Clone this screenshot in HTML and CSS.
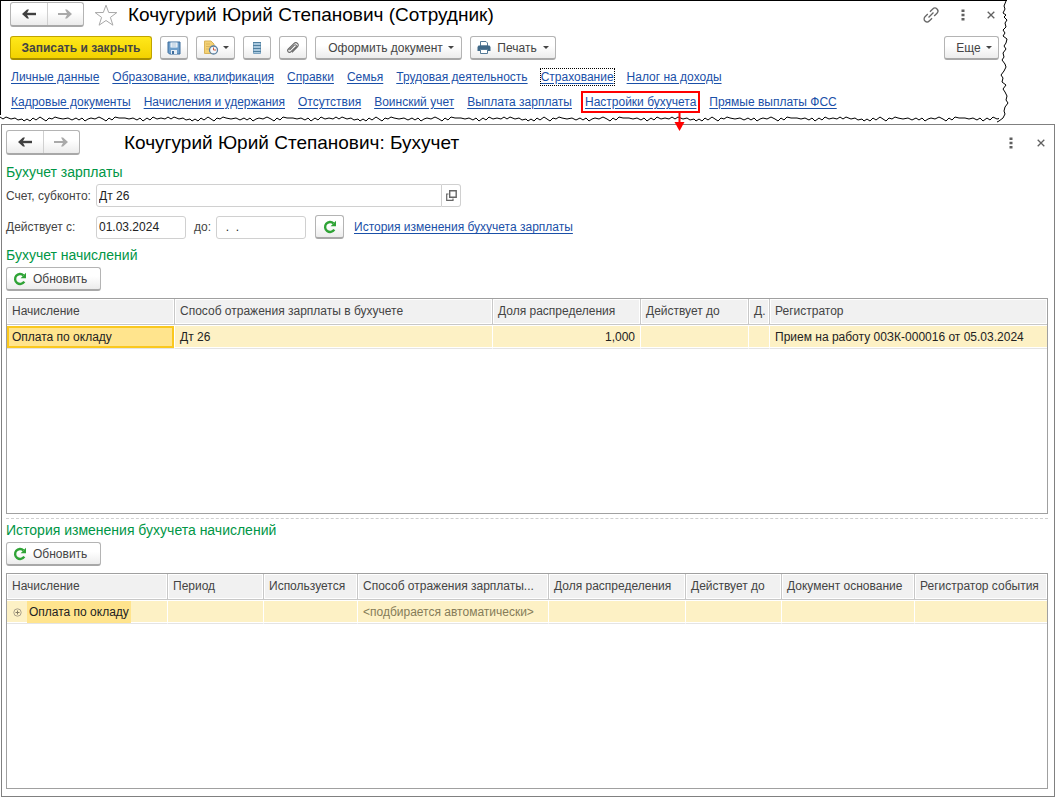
FILE: index.html
```html
<!DOCTYPE html>
<html lang="ru">
<head>
<meta charset="utf-8">
<title>Кочугурий Юрий Степанович: Бухучет</title>
<link rel="stylesheet" href="styles.css">
</head>
<body>
<svg class="defs" aria-hidden="true">
  <defs>
    <symbol id="i-back" viewBox="0 0 14 10"><path d="M4 5h10" stroke="currentColor" stroke-width="2.400"/><path d="M0 5 5 .5h2L5 4v2l2 3.500H5z" fill="currentColor"/></symbol>
    <symbol id="i-forward" viewBox="0 0 14 10"><path d="M0 5h10" stroke="currentColor" stroke-width="2"/><path d="M14 5 9 .5H7L9 4v2L7 9.500h2z" fill="currentColor"/></symbol>
    <symbol id="i-close" viewBox="0 0 8 8"><path d="M.7.7l6.600 6.600M7.300.7.7 7.300" stroke="currentColor" stroke-width="1.300"/></symbol>
    <symbol id="i-dots" viewBox="0 0 4 12"><path d="M.5.5h3v2.500h-3zM.5 4.700h3v2.500h-3zM.5 9h3v2.500h-3z" fill="currentColor"/></symbol>
    <symbol id="i-refresh" viewBox="0 0 14 14"><path d="M11.300 9.700A5 5 0 1 1 10.500 3.300" fill="none" stroke="#2fa336" stroke-width="2.400"/><path d="M13 .8v5.400H7.600z" fill="#2fa336"/></symbol>
  </defs>
</svg>

<section class="employee">
  <div class="employee-body">
    <header class="titlebar">
      <div class="nav">
        <button aria-label="Назад"><svg class="arrow"><use href="#i-back"/></svg></button>
        <button class="dim" aria-label="Вперед"><svg class="arrow"><use href="#i-forward"/></svg></button>
      </div>
      <svg class="star" viewBox="0 0 24 22"><path d="M12 1.200l2.700 7.300 8.100.1-6.400 4.800 2.500 7.800-6.900-4.700-6.900 4.700 2.500-7.800L1.200 8.600l8.100-.1z" fill="#fff" stroke="#a8a8a8"/></svg>
      <h1>Кочугурий Юрий Степанович (Сотрудник)</h1>
      <div class="window-tools">
        <svg class="chain" viewBox="0 0 16 16"><g transform="rotate(-45 8 8)" fill="none" stroke="#666" stroke-width="1.300"><path d="M6.500 5H2.500a3 3 0 0 0 0 6h4M9.500 5h4a3 3 0 0 1 0 6h-4M4.500 8h7"/></g></svg>
        <svg class="dots"><use href="#i-dots"/></svg>
        <svg class="close"><use href="#i-close"/></svg>
      </div>
    </header>
    <div class="toolbar">
      <button class="btn primary">Записать и закрыть</button>
      <button class="btn icon" aria-label="Записать"><svg width="14" height="14" viewBox="0 0 14 14"><path d="M1 1h12v12H2.500L1 11.500z" fill="#6f9fcb" stroke="#3d6c9c"/><path d="M3.500 1.500h7v5h-7z" fill="#fff"/><path d="M4.500 3h5M4.500 5h5" stroke="#9db9d4"/><path d="M4 9h6v4H4z" fill="#e6eef5"/><path d="M5 10h2v3H5z" fill="#3d6c9c"/></svg></button>
      <button class="btn icon wide" aria-label="Создать на основании"><svg width="16" height="15" viewBox="0 0 16 15"><path d="M1.500 1h6.500l3 3v9.500H1.500z" fill="#f3d175" stroke="#d9b45a"/><path d="M3 4h4M3 6.500h5M3 9h3" stroke="#dcb65c"/><circle cx="10.500" cy="10" r="4" fill="#f4f8fc" stroke="#5b7f9f" stroke-width="1.300"/><path d="M10.500 7.500V10h2.500" fill="none" stroke="#d05a3a"/></svg><i class="caret"></i></button>
      <button class="btn icon" aria-label="Список"><svg width="8" height="12" viewBox="0 0 8 12"><path d="M.5.5h7v11h-7z" fill="#a9c8de" stroke="#7ba3c0"/><path d="M0 .5h8M0 3.500h8M0 6.500h8M0 9.500h8" stroke="#4f7f9f"/></svg></button>
      <button class="btn icon" aria-label="Файлы"><svg width="14" height="14" viewBox="0 0 14 14"><path d="M3.500 8.500 8.300 3.700c1.300-1.300 2.800.3 1.600 1.600L5 10.200C3 12.200.400 9.600 2.400 7.500L7.800 2.100c2.700-2.600 6 .8 3.400 3.500L6 10.900" transform="translate(0 .5)" fill="none" stroke="#666" stroke-width="1.100"/></svg></button>
      <button class="btn doc">Оформить документ<i class="caret"></i></button>
      <button class="btn print"><svg width="14" height="13" viewBox="0 0 14 13"><path d="M3.500.5h5.500l1.500 1.500v3h-7z" fill="#fff" stroke="#557a97"/><path d="M1.500 4.500h11l1 1.500v4h-13V6z" fill="#3f6887"/><path d="M3.500 8.500h7v4h-7z" fill="#fff" stroke="#557a97"/></svg>Печать<i class="caret"></i></button>
      <button class="btn more">Еще<i class="caret"></i></button>
    </div>
    <nav class="links">
      <div><a href="#">Личные данные</a><a href="#">Образование, квалификация</a><a href="#">Справки</a><a href="#">Семья</a><a href="#">Трудовая деятельность</a><a href="#" class="focused">Страхование</a><a href="#">Налог на доходы</a></div>
      <div><a href="#">Кадровые документы</a><a href="#">Начисления и удержания</a><a href="#">Отсутствия</a><a href="#">Воинский учет</a><a href="#">Выплата зарплаты</a><a href="#" class="marked">Настройки бухучета<svg class="pointer" viewBox="0 0 11 20"><path d="M5.500 0v12" stroke="red" stroke-width="2"/><path d="M.5 10h10l-5 9z" fill="red"/></svg></a><a href="#">Прямые выплаты ФСС</a></div>
    </nav>
  </div>
  <svg class="tear-right" viewBox="0 0 8 114" preserveAspectRatio="none"><path d="M7 0 5 5 6 8 4 12l3 2-2 2 3 3-2 3 1 4-3 3 2 3-2 3 4 3-1 4-2 3 2 3-3 4 1 4-2 3 3 4 1 3-2 4-3 4 2 3-1 4 4 3-3 4 2 3 2 4-1 4 2 3-3 4-1 4 1 3-2 4-4 3-2 1"/></svg>
  <svg class="tear-bottom"><defs><pattern id="tear" width="168" height="8" patternUnits="userSpaceOnUse"><path d="M0 2 3 4 6 2 11 4 15 3 18 5 22 4 24 6 27 4 30 6 33 3 36 5 40 2 43 4 46 6 49 3 52 4 55 2 58 3 63 4 68 3 72 5 76 3 79 5 82 3 85 6 88 4 91 3 95 4 99 2 103 4 106 6 109 3 112 5 115 2 119 3 125 3 129 4 133 3 137 5 140 3 143 6 147 3 150 5 153 2 157 4 161 3 165 4 168 2"/></pattern></defs><rect width="100%" height="8" fill="url(#tear)"/></svg>
</section>

<main class="accounting">
  <header class="titlebar">
    <div class="nav">
      <button aria-label="Назад"><svg class="arrow"><use href="#i-back"/></svg></button>
      <button class="dim" aria-label="Вперед"><svg class="arrow"><use href="#i-forward"/></svg></button>
    </div>
    <h1 class="indent">Кочугурий Юрий Степанович: Бухучет</h1>
    <div class="window-tools">
      <svg class="dots"><use href="#i-dots"/></svg>
      <svg class="close"><use href="#i-close"/></svg>
    </div>
  </header>

  <h2>Бухучет зарплаты</h2>
  <div class="row">
    <label for="account">Счет, субконто:</label>
    <div class="combo"><input id="account" value="Дт 26"><button aria-label="Открыть"><svg width="11" height="11" viewBox="0 0 11 11"><path d="M3.700.8h6.500v6.500H3.700z" fill="none" stroke="#666" stroke-width="1.400"/><path d="M2.500 4H.7v6.300H7V8.500" fill="none" stroke="#666" stroke-width="1.200"/></svg></button></div>
  </div>
  <div class="row dates">
    <label for="from">Действует с:</label>
    <input id="from" class="date" value="01.03.2024">
    <label for="to" class="short">до:</label>
    <input id="to" class="date" value="  .  .">
    <button class="btn refresh" aria-label="Обновить"><svg class="ring"><use href="#i-refresh"/></svg></button>
    <a href="#">История изменения бухучета зарплаты</a>
  </div>

  <h2 class="tight">Бухучет начислений</h2>
  <button class="btn update"><svg class="ring"><use href="#i-refresh"/></svg>Обновить</button>
  <div class="grid">
    <table class="accruals">
      <colgroup><col class="c168"><col class="c318"><col class="c148"><col class="c108"><col class="c21"><col></colgroup>
      <thead><tr><th>Начисление</th><th>Способ отражения зарплаты в бухучете</th><th>Доля распределения</th><th>Действует до</th><th>Д.</th><th>Регистратор</th></tr></thead>
      <tbody><tr><td class="current">Оплата по окладу</td><td>Дт 26</td><td class="num">1,000</td><td></td><td></td><td>Прием на работу 00ЗК-000016 от 05.03.2024</td></tr></tbody>
    </table>
  </div>

  <div class="splitter"></div>
  <h2>История изменения бухучета начислений</h2>
  <button class="btn update"><svg class="ring"><use href="#i-refresh"/></svg>Обновить</button>
  <div class="grid">
    <table class="history">
      <colgroup><col class="c161"><col class="c96"><col class="c94"><col class="c191"><col class="c137"><col class="c96"><col class="c133"><col></colgroup>
      <thead><tr><th>Начисление</th><th>Период</th><th>Используется</th><th>Способ отражения зарплаты...</th><th>Доля распределения</th><th>Действует до</th><th>Документ основание</th><th>Регистратор события</th></tr></thead>
      <tbody><tr><td class="tree"><div><svg width="9" height="9" viewBox="0 0 9 9"><circle cx="4.500" cy="4.500" r="3.700" fill="none" stroke="#aaa08a"/><path d="M2.500 4.500h4M4.500 2.500v4" stroke="#857c66"/></svg><span>Оплата по окладу</span></div></td><td></td><td></td><td class="auto">&lt;подбирается автоматически&gt;</td><td></td><td></td><td></td><td></td></tr></tbody>
    </table>
  </div>
</main>
</body>
</html>
```
FILE: styles.css
```css
* { box-sizing: border-box; }

body {
  margin: 0;
  min-height: 100vh;
  display: flex;
  flex-direction: column;
  background: #fff;
  color: #444;
  font: 12px/16px "Liberation Sans", Arial, sans-serif;
}

button, input { font: inherit; color: inherit; }
svg { display: block; flex: none; }
a { color: #1a50a8; text-underline-offset: 2px; }
h1 { margin: 0; color: #000; font-size: 19px; line-height: 24px; font-weight: 400; white-space: nowrap; }
h2 { margin: 0; color: #009646; font-size: 14px; line-height: 20px; font-weight: 400; }

.defs { position: absolute; width: 0; height: 0; }

/* employee window with torn edges */
.employee {
  display: grid;
  grid-template-columns: 1fr 8px;
  margin-right: 51px;
  border-top: 1px solid #000;
}
.employee-body { padding: 1px 0 0 9px; border-left: 1px solid #000; }
.tear-right { width: 8px; height: 100%; overflow: visible; }
.tear-bottom { width: 100%; height: 8px; margin-bottom: 1px; }
.tear-right path, .tear-bottom path { fill: none; stroke: #000; }

.titlebar { display: flex; align-items: center; }
.titlebar h1 { margin-left: 10px; }
.titlebar h1.indent { margin-left: 44px; }
.nav {
  display: flex;
  width: 74px;
  height: 25px;
  border: 1px solid #b4b4b4;
  border-bottom: 2px solid #a8a8a8;
  border-radius: 3px;
  background: linear-gradient(#fff 40%, #ececec);
}
.nav button {
  flex: 1;
  display: flex;
  align-items: center;
  justify-content: center;
  padding: 0;
  border: 0;
  background: none;
  color: #404040;
}
.nav .dim { color: #aaa; border-left: 1px solid #d0d0d0; }
.arrow { width: 14px; height: 10px; }
.star { width: 24px; height: 24px; margin-left: 10px; }
.window-tools { display: flex; align-items: center; gap: 24px; margin: 0 3px 0 auto; color: #606060; }
.employee .window-tools { gap: 22px; margin-right: 4px; }
.chain { width: 16px; height: 16px; overflow: visible; }
.dots { width: 4px; height: 12px; }
.close { width: 8px; height: 8px; }

.btn {
  display: flex;
  align-items: center;
  justify-content: center;
  height: 24px;
  padding: 0 8px;
  border: 1px solid #b4b4b4;
  border-bottom: 2px solid #a8a8a8;
  border-radius: 3px;
  background: linear-gradient(#fff 40%, #ececec);
  white-space: nowrap;
}
.toolbar { display: flex; gap: 8px; margin-top: 9px; }
.primary {
  width: 142px;
  border-color: #c0a400 #c0a400 #a88f00;
  background: linear-gradient(#ffe81a, #f3d200);
  font-weight: 700;
}
.icon { width: 28px; padding: 0; }
.icon.wide { width: 39px; gap: 4px; }
.doc { width: 147px; gap: 5px; padding: 0 5px 0 10px; }
.print { width: 86px; gap: 6px; padding: 0 5px; }
.more { width: 55px; gap: 5px; padding: 0 5px 0 10px; margin-left: auto; }
.caret { border: 3px solid transparent; border-top-color: #444; border-bottom: 0; }

.links { padding-top: 4px; }
.links div { display: flex; align-items: center; gap: 13px; height: 25px; padding-left: 1px; white-space: nowrap; }
.focused { outline: 1px dotted #000; }
.marked { position: relative; outline: 2px solid red; outline-offset: 1px; padding: 0 1px; margin: 0 -1px; }
.pointer { position: absolute; left: 90px; top: 18px; width: 11px; height: 20px; z-index: 1; }

/* accounting window */
.accounting {
  flex: 1;
  display: flex;
  flex-direction: column;
  margin: 0 3px 4px 1px;
  padding: 5px 6px 7px 4px;
  border: 1px solid #808080;
}
.accounting h2 { margin-top: 7px; }
.accounting h2.tight { margin-top: 6px; }
.row { display: flex; align-items: center; margin-top: 2px; }
.row label { width: 90px; white-space: nowrap; }
.row .short { width: 20px; margin: 0 2px 0 8px; }
.dates { margin-top: 8px; }
.dates a { margin-left: 10px; }
.row input { height: 23px; padding: 0 2px; border: 1px solid #d0d0d0; border-radius: 3px; background: #fff; color: #222; }
.combo { display: flex; width: 365px; }
.combo input { flex: 1; border-radius: 3px 0 0 3px; }
.combo button {
  width: 19px;
  display: grid;
  place-items: center;
  padding: 0;
  border: 1px solid #d0d0d0;
  border-left: 0;
  border-radius: 0 3px 3px 0;
  background: #fff;
}
.row .date { width: 90px; white-space: pre; }
.refresh { width: 29px; padding: 0; margin-left: 9px; }
.ring { width: 14px; height: 14px; }
.update { align-self: flex-start; justify-content: flex-start; width: 95px; gap: 6px; margin-top: 2px; padding: 0 6px; }

.grid { flex: 1; margin-top: 7px; border: 1px solid #a0a0a0; }
table { width: 100%; border-collapse: separate; border-spacing: 0; table-layout: fixed; }
th, td { overflow: hidden; padding: 0 5px; text-align: left; white-space: nowrap; text-overflow: ellipsis; font-weight: 400; }
th { height: 26px; padding: 0 0 2px 5px; border-right: 1px solid #c8c8c8; border-bottom: 1px solid #c8c8c8; background: #f1f1f1; box-shadow: inset 0 0 0 1px #fff; }
td { height: 24px; border-top: 1px solid #fff; border-right: 1px solid #fff; border-bottom: 1px solid #e4e4e4; background: #fdf1c5; color: #222; box-shadow: inset 0 -1px #fff; }
th:last-child, td:last-child { border-right: 0; }
.current { background: #ffe48d; box-shadow: inset 0 0 0 2px #fac81e; }
.num { text-align: right; }
.auto { color: #857c58; }
.tree { padding-left: 6px; }
.tree div { display: flex; align-items: center; gap: 5px; }
.tree span { padding: 3px 2px; background: #ffe48d; }
.splitter { margin-top: 4px; border-top: 1px dashed #d0d0d0; }
.accounting .splitter + h2 { margin-top: 1px; }

.c168 { width: 168px; }
.c318 { width: 318px; }
.c148 { width: 148px; }
.c108 { width: 108px; }
.c21 { width: 21px; }
.c161 { width: 161px; }
.c96 { width: 96px; }
.c94 { width: 94px; }
.c191 { width: 191px; }
.c137 { width: 137px; }
.c133 { width: 133px; }
```
